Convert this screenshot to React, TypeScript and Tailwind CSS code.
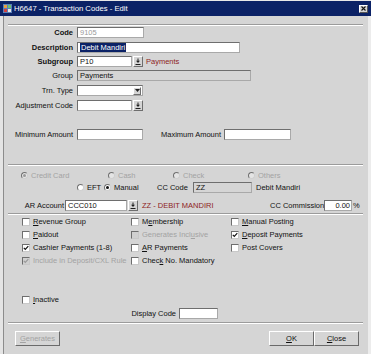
import React from "react";

type Kids = { children?: React.ReactNode };

function Field({ className = "", grey = false, children }: { className?: string; grey?: boolean } & Kids) {
  return (
    <div
      className={`h-[11px] shrink-0 flex items-center pl-[2px] border border-t-[#6e6e6e] border-l-[#6e6e6e] border-b-[#a9a9a9] border-r-[#a9a9a9] overflow-hidden whitespace-nowrap ${
        grey ? "bg-[#d5d5d5]" : "bg-white"
      } ${className}`}
    >
      {children}
    </div>
  );
}

function LovIcon() {
  return (
    <svg width="6" height="7" viewBox="0 0 6 7">
      <path d="M3 0.5V3" stroke="#202020" strokeWidth="1" />
      <path d="M1 2.8H5L3 5Z" fill="#202020" />
      <path d="M0.5 6.5H5.5" stroke="#202020" strokeWidth="1" />
    </svg>
  );
}

function LovBtn() {
  return (
    <div className="h-[11px] w-[10px] ml-[1px] shrink-0 flex items-center justify-center bg-[#d5d5d5] border border-t-white border-l-white border-b-[#6e6e6e] border-r-[#6e6e6e]">
      <LovIcon />
    </div>
  );
}

function Sep() {
  return <div className="ml-[4px] w-[355px] h-[2px] border-t border-t-[#9b9b9b] border-b border-b-white" />;
}

function Check({ checked = false, disabled = false }: { checked?: boolean; disabled?: boolean }) {
  return (
    <div
      className={`w-[8px] h-[8px] shrink-0 flex items-center justify-center border border-t-[#6e6e6e] border-l-[#6e6e6e] border-b-[#c8c8c8] border-r-[#c8c8c8] ${
        disabled ? "bg-[#d0d0d0]" : "bg-white"
      }`}
    >
      {checked && (
        <svg width="6" height="6" viewBox="0 0 6 6">
          <path d="M0.8 2.8L2.3 4.4L5.3 1.2" fill="none" stroke={disabled ? "#9a9a9a" : "#111"} strokeWidth="1.2" />
        </svg>
      )}
    </div>
  );
}

function CheckItem({
  checked = false,
  disabled = false,
  className = "",
  children,
}: { checked?: boolean; disabled?: boolean; className?: string } & Kids) {
  return (
    <div className={`flex items-center shrink-0 ${className}`}>
      <Check checked={checked} disabled={disabled} />
      <span className={`ml-[3px] whitespace-nowrap ${disabled ? "text-[#a3a3a3]" : "text-[#111]"}`}>{children}</span>
    </div>
  );
}

function Radio({ on = false, disabled = false }: { on?: boolean; disabled?: boolean }) {
  return (
    <div
      className={`w-[7px] h-[7px] shrink-0 rounded-full flex items-center justify-center border border-t-[#707070] border-l-[#707070] border-b-[#cfcfcf] border-r-[#cfcfcf] ${
        disabled ? "bg-[#e4e4e4]" : "bg-white"
      }`}
    >
      {on && <div className={`w-[3px] h-[3px] rounded-full ${disabled ? "bg-[#9a9a9a]" : "bg-[#111]"}`} />}
    </div>
  );
}

function RadioItem({
  on = false,
  disabled = false,
  className = "",
  children,
}: { on?: boolean; disabled?: boolean; className?: string } & Kids) {
  return (
    <div className={`flex items-center shrink-0 ${className}`}>
      <Radio on={on} disabled={disabled} />
      <span className={`ml-[3px] whitespace-nowrap ${disabled ? "text-[#a3a3a3]" : "text-[#111]"}`}>{children}</span>
    </div>
  );
}

function Btn({ className = "", disabled = false, children }: { className?: string; disabled?: boolean } & Kids) {
  return (
    <div
      className={`h-[15px] shrink-0 flex items-center justify-center bg-[#d5d5d5] border border-t-white border-l-white border-b-[#6a6a6a] border-r-[#6a6a6a] ${
        disabled ? "text-[#a3a3a3]" : "text-[#111]"
      } ${className}`}
    >
      {children}
    </div>
  );
}

export default function App() {
  return (
    <div className="w-[371px] h-[354px] overflow-hidden bg-[#d5d5d5] font-[family-name:'Liberation_Sans',Arial,sans-serif] text-[7.5px] leading-none text-[#111] flex flex-col">
      <div className="h-[1px] bg-[#e8e8e8] shrink-0" />
      {/* Title bar */}
      <div className="h-[15px] shrink-0 bg-[#0b2266] flex items-center pl-[3px] pr-[3px]">
        <svg width="9" height="9" viewBox="0 0 9 9" className="shrink-0">
          <rect x="0" y="0" width="9" height="9" fill="#5a7fb8" />
          <rect x="1" y="1" width="3" height="3" fill="#e8a040" />
          <rect x="5" y="1" width="3" height="3" fill="#6cc070" />
          <rect x="1" y="5" width="3" height="3" fill="#d04040" />
          <rect x="5" y="5" width="3" height="3" fill="#e8e8e8" />
        </svg>
        <span className="ml-[2px] text-white text-[7.7px] whitespace-nowrap">H6647 - Transaction Codes - Edit</span>
        <div className="flex-1" />
        <div className="w-[9px] h-[8px] bg-[#d5d5d5] border border-t-white border-l-white border-b-[#555] border-r-[#555] flex items-center justify-center">
          <svg width="5" height="5" viewBox="0 0 5 5">
            <path d="M0.5 0.5L4.5 4.5M4.5 0.5L0.5 4.5" stroke="#111" strokeWidth="1.1" />
          </svg>
        </div>
      </div>

      <div className="flex flex-1">
        <div className="w-[3px] bg-[#e4e4e4] shrink-0" />
        <div className="w-[1px] bg-[#8c8c8c] shrink-0" />
        <div className="w-[364px] shrink-0 flex flex-col">
          <div className="mt-[8px]">
            <Sep />
          </div>

          {/* Code */}
          <div className="mt-[1px] flex items-center">
            <div className="w-[69px] text-right font-bold">Code</div>
            <Field className="ml-[4px] w-[67px]">
              <span className="text-[#9a9a9a]">9105</span>
            </Field>
          </div>
          {/* Description */}
          <div className="mt-[4px] flex items-center">
            <div className="w-[69px] text-right font-bold">Description</div>
            <Field className="ml-[4px] w-[163px] pl-[1px]">
              <span className="bg-[#0b2266] text-white h-[9px] flex items-center px-[1px]">Debit Mandiri</span>
            </Field>
          </div>
          {/* Subgroup */}
          <div className="mt-[3px] flex items-center">
            <div className="w-[69px] text-right font-bold">Subgroup</div>
            <Field className="ml-[4px] w-[55px]">P10</Field>
            <LovBtn />
            <span className="ml-[3px] text-[#8e2424]">Payments</span>
          </div>
          {/* Group */}
          <div className="mt-[3px] flex items-center">
            <div className="w-[69px] text-right">Group</div>
            <Field grey className="ml-[4px] w-[174px]">
              Payments
            </Field>
          </div>
          {/* Trn Type */}
          <div className="mt-[4px] flex items-center">
            <div className="w-[69px] text-right">Trn. Type</div>
            <Field className="ml-[4px] w-[66px] justify-end pr-[1px]">
              <div className="w-[8px] h-[8px] bg-[#d5d5d5] border border-t-white border-l-white border-b-[#6e6e6e] border-r-[#6e6e6e] flex items-center justify-center">
                <svg width="5" height="3" viewBox="0 0 5 3">
                  <path d="M0 0H5L2.5 3Z" fill="#202020" />
                </svg>
              </div>
            </Field>
          </div>
          {/* Adjustment Code */}
          <div className="mt-[4px] flex items-center">
            <div className="w-[69px] text-right">Adjustment Code</div>
            <Field className="ml-[4px] w-[55px]" />
            <LovBtn />
          </div>
          {/* Min / Max */}
          <div className="mt-[18px] flex items-center">
            <div className="w-[69px] text-right">Minimum Amount</div>
            <Field className="ml-[4px] w-[66px]" />
            <div className="w-[78px] text-right">Maximum Amount</div>
            <Field className="ml-[3px] w-[67px]" />
          </div>

          <div className="mt-[24px]">
            <Sep />
          </div>

          {/* Radio row 1 */}
          <div className="mt-[4px] h-[11px] flex items-center pl-[17px]">
            <RadioItem on disabled className="w-[87px]">
              Credit Card
            </RadioItem>
            <RadioItem disabled className="w-[65px]">
              Cash
            </RadioItem>
            <RadioItem disabled className="w-[75px]">
              Check
            </RadioItem>
            <RadioItem disabled>Others</RadioItem>
          </div>
          {/* Radio row 2 */}
          <div className="mt-[1px] flex items-center pl-[73px]">
            <RadioItem className="w-[27px]">EFT</RadioItem>
            <RadioItem on className="w-[53px]">
              Manual
            </RadioItem>
            <div className="w-[36px] whitespace-nowrap">CC Code</div>
            <Field grey className="w-[59px]">
              ZZ
            </Field>
            <span className="ml-[4px] whitespace-nowrap">Debit Mandiri</span>
          </div>
          {/* AR Account */}
          <div className="mt-[7px] flex items-center">
            <div className="w-[60px] text-right whitespace-nowrap">AR Account</div>
            <Field className="ml-[1px] w-[62px]">CCC010</Field>
            <LovBtn />
            <div className="ml-[4px] w-[128px] whitespace-nowrap text-[#8e2424]">ZZ - DEBIT MANDIRI</div>
            <div className="w-[52px] text-right whitespace-nowrap">CC Commission</div>
            <Field className="ml-[2px] w-[28px] justify-end pr-[1px]">0.00</Field>
            <span className="ml-[1px]">%</span>
          </div>

          <div className="mt-[2px]">
            <Sep />
          </div>

          {/* Checkboxes */}
          <div className="flex flex-col pl-[18px]">
            <div className="h-[13px] flex items-center">
              <CheckItem className="w-[109px]">
                <u>R</u>evenue Group
              </CheckItem>
              <CheckItem className="w-[100px]">
                M<u>e</u>mbership
              </CheckItem>
              <CheckItem>
                <u>M</u>anual Posting
              </CheckItem>
            </div>
            <div className="h-[13px] flex items-center">
              <CheckItem className="w-[109px]">
                <u>P</u>aidout
              </CheckItem>
              <CheckItem disabled className="w-[100px]">
                Generates Incl<u>u</u>sive
              </CheckItem>
              <CheckItem checked>
                <u>D</u>eposit Payments
              </CheckItem>
            </div>
            <div className="h-[13px] flex items-center">
              <CheckItem checked className="w-[109px]">
                Cashier Payments (1-8)
              </CheckItem>
              <CheckItem className="w-[100px]">
                <u>A</u>R Payments
              </CheckItem>
              <CheckItem>Post Covers</CheckItem>
            </div>
            <div className="h-[13px] flex items-center">
              <CheckItem checked disabled className="w-[109px]">
                Include in Deposit/CXL Rule
              </CheckItem>
              <CheckItem className="w-[100px]">
                Chec<u>k</u> No. Mandatory
              </CheckItem>
            </div>
          </div>

          {/* Inactive */}
          <div className="mt-[27px] h-[12px] flex items-center pl-[18px]">
            <CheckItem>
              <u>I</u>nactive
            </CheckItem>
          </div>
          {/* Display Code */}
          <div className="mt-[2px] flex items-center">
            <div className="w-[172px] text-right whitespace-nowrap">Display Code</div>
            <Field className="ml-[3px] w-[39px]" />
          </div>

          <div className="mt-[3px]">
            <Sep />
          </div>

          {/* Buttons */}
          <div className="mt-[7px] flex items-center pl-[11px] pr-[9px]">
            <Btn disabled className="w-[45px]">
              <span>
                <u>G</u>enerates
              </span>
            </Btn>
            <div className="flex-1" />
            <Btn className="w-[45px]">
              <span>
                <u>O</u>K
              </span>
            </Btn>
            <Btn className="w-[45px]">
              <span>
                <u>C</u>lose
              </span>
            </Btn>
          </div>
        </div>
        <div className="w-[3px] bg-[#ececec] shrink-0" />
      </div>
    </div>
  );
}
